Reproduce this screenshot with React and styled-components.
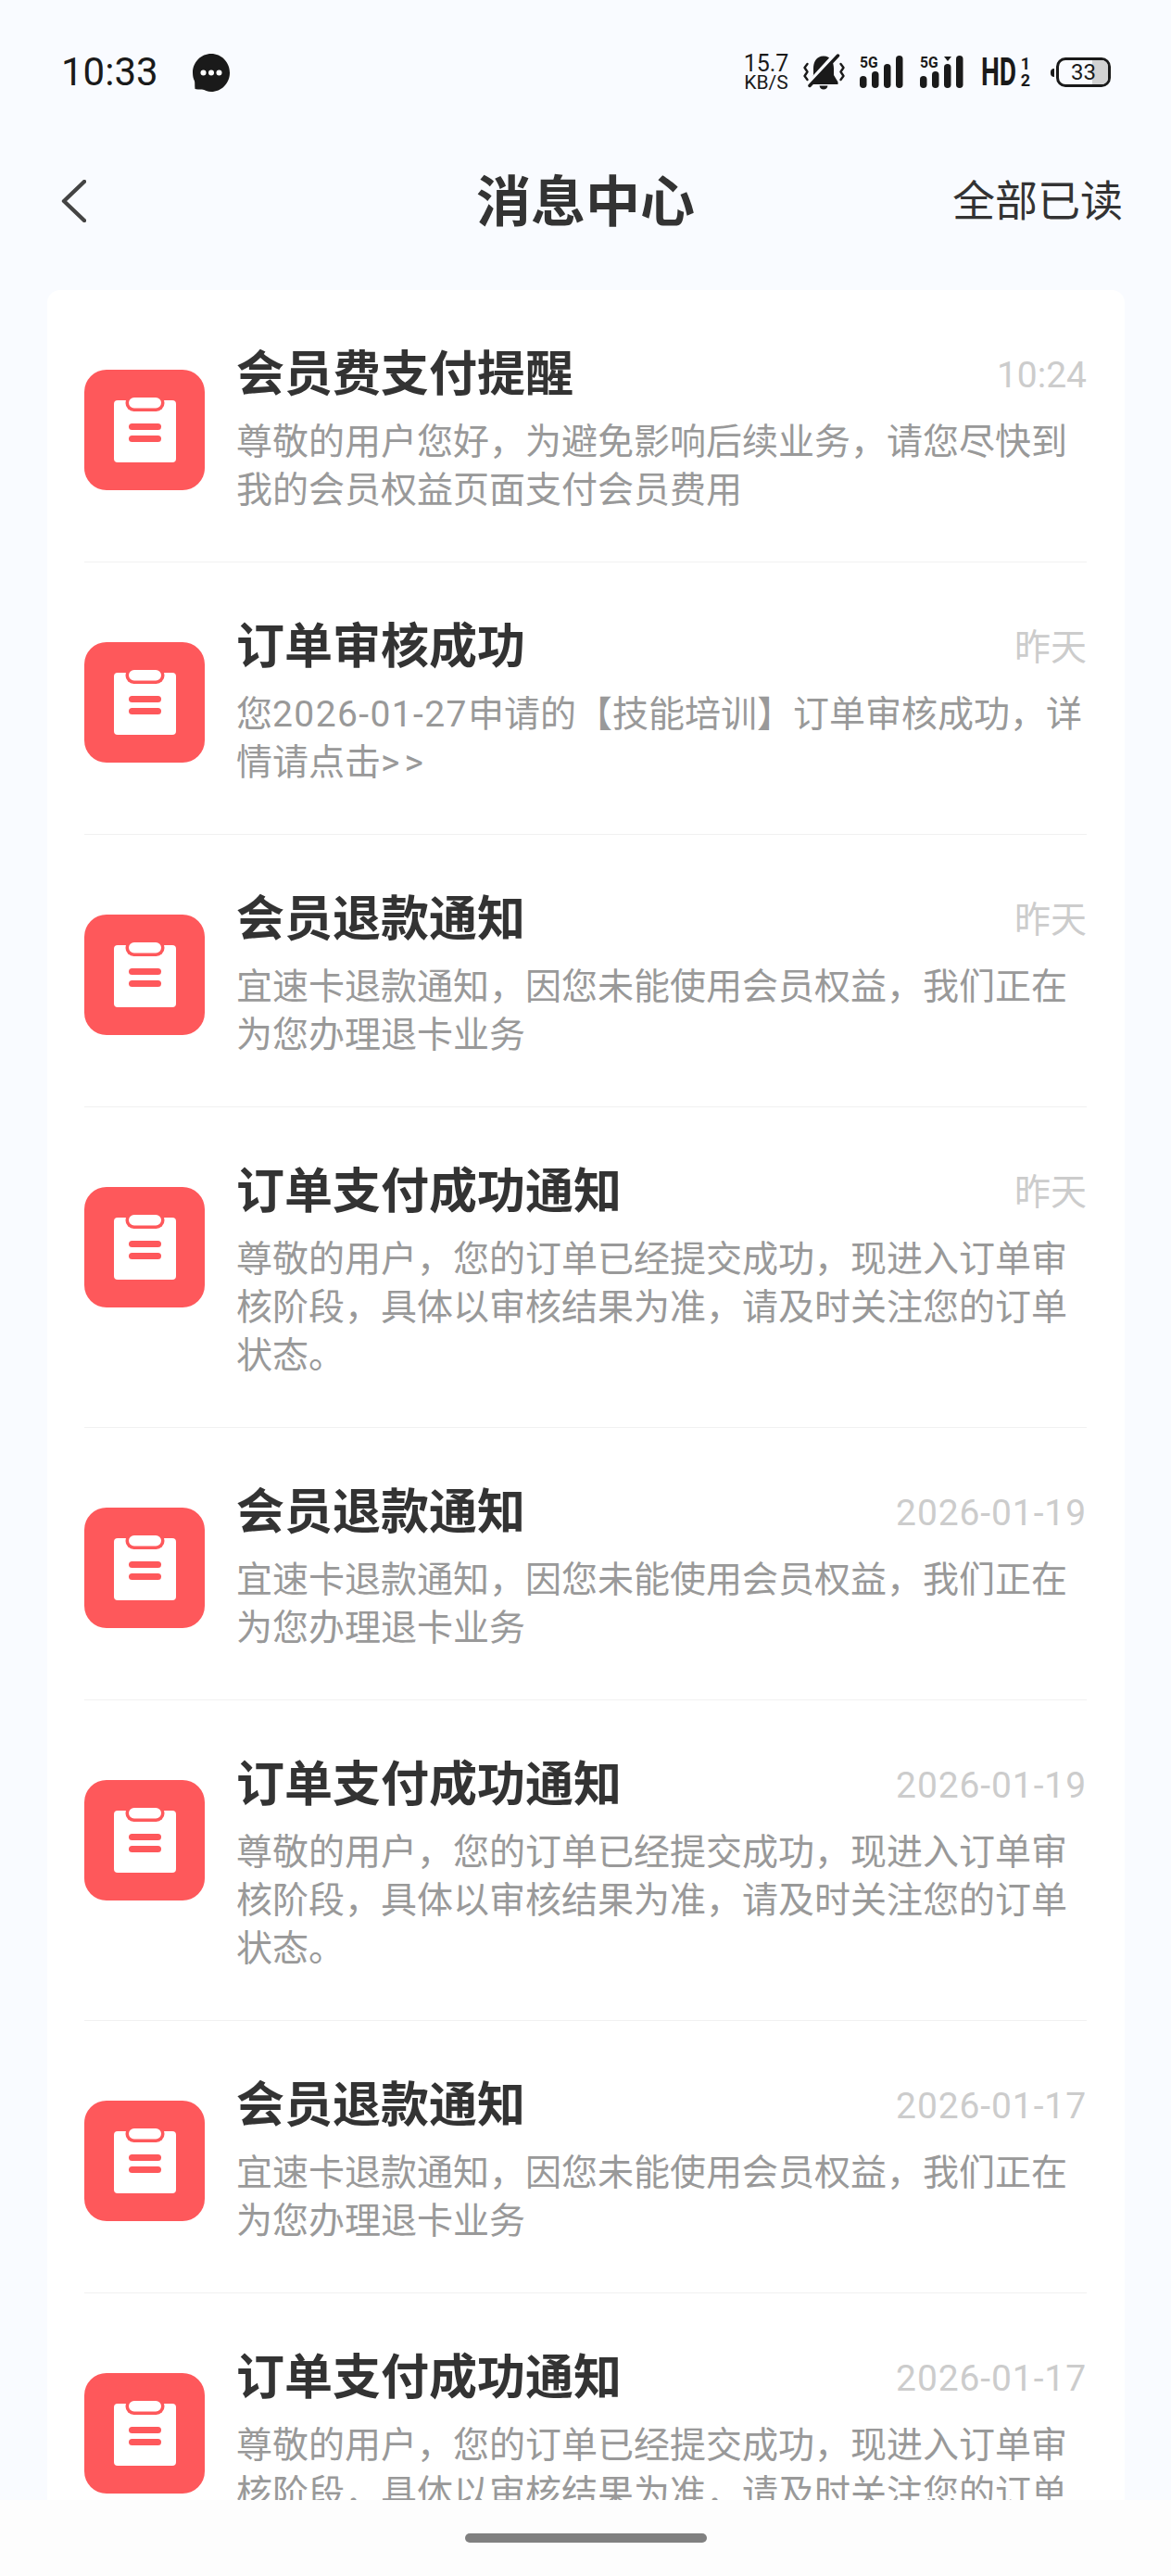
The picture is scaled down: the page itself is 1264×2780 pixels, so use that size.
import React from 'react';
import styled, { createGlobalStyle } from 'styled-components';

const GlobalStyle = createGlobalStyle`
  html, body {
    margin: 0;
    padding: 0;
    background: #f9fbff;
  }
  * {
    box-sizing: border-box;
  }
`;

const Screen = styled.div`
  width: 1264px;
  height: 2780px;
  display: flex;
  flex-direction: column;
  background: #f9fbff;
  font-family: Roboto, "Noto Sans CJK SC", sans-serif;
  overflow: hidden;
`;

const StatusBar = styled.div`
  height: 156px;
  flex: none;
  display: flex;
  align-items: center;
  justify-content: space-between;
  padding: 0 65px 0 66px;
  color: #1a1a1a;
`;

const StatusLeft = styled.div`
  display: flex;
  align-items: center;
  gap: 40px;
`;

const Clock = styled.span`
  font-size: 42px;
  line-height: 50px;
  width: 102px;
  white-space: nowrap;
`;

const StatusRight = styled.div`
  display: flex;
  align-items: center;
`;

const Speed = styled.div`
  width: 48px;
  display: flex;
  flex-direction: column;
  align-items: center;
  margin-right: 16px;
`;

const SpeedValue = styled.span`
  font-size: 25px;
  line-height: 22px;
`;

const SpeedUnit = styled.span`
  font-size: 21px;
  line-height: 18px;
`;

const StatusIcon = styled.svg`
  display: block;
  flex: none;
  margin-right: ${(p) => p.$gap}px;
`;

const SignalWrap = styled.div`
  position: relative;
  width: 47px;
  height: 36px;
  flex: none;
  margin-right: ${(p) => p.$gap}px;
`;

const NetLabel = styled.span`
  position: absolute;
  top: 0;
  left: 0;
  width: 21px;
  font-size: 17px;
  font-weight: 700;
  line-height: 14px;
  transform: scaleX(0.92);
  transform-origin: left center;
`;

const HdBadge = styled.div`
  width: 53px;
  height: 32px;
  display: flex;
  justify-content: space-between;
  margin-right: 22px;
`;

const HdText = styled.span`
  display: block;
  width: 57px;
  margin-right: -19px;
  font-size: 42px;
  font-weight: 700;
  line-height: 32px;
  transform: scaleX(0.67);
  transform-origin: left center;
`;

const HdFraction = styled.div`
  display: flex;
  flex-direction: column;
  justify-content: space-between;
  align-items: center;
  width: 10px;
`;

const HdDigit = styled.span`
  font-size: 18px;
  font-weight: 700;
  line-height: 14px;
`;

const BatteryWrap = styled.div`
  display: flex;
  align-items: center;
  gap: 2px;
`;

const BatteryNub = styled.div`
  width: 4px;
  height: 9px;
  background: #1a1a1a;
  border-radius: 4px 0 0 4px;
`;

const BatteryBody = styled.div`
  position: relative;
  width: 59px;
  height: 32px;
  border: 3.5px solid #1a1a1a;
  border-radius: 10px;
  overflow: hidden;
  display: flex;
  align-items: center;
  justify-content: center;
`;

const BatteryFill = styled.div`
  position: absolute;
  top: 0;
  right: 0;
  bottom: 0;
  width: 17px;
  background: #d2d2d2;
`;

const BatteryLevel = styled.span`
  position: relative;
  font-size: 24px;
  line-height: 1;
`;

const NavBar = styled.div`
  height: 122px;
  flex: none;
  display: grid;
  grid-template-columns: 1fr auto 1fr;
  align-items: center;
  padding: 0 52px;
  color: #333;
`;

const BackButton = styled.div`
  padding-left: 14px;
`;

const Title = styled.h1`
  margin: 3px 0 0;
  font-size: 59px;
  font-weight: 700;
  line-height: 70px;
  color: #333;
`;

const ReadAll = styled.span`
  justify-self: end;
  font-size: 46px;
  line-height: 60px;
  color: #333;
`;

const ListArea = styled.div`
  flex: 1;
  min-height: 0;
  overflow: hidden;
  padding: 35px 50px 0 51px;
`;

const Card = styled.div`
  background: #fff;
  border-radius: 14px;
  padding: 0 41px 0 40px;
`;

const Row = styled.div`
  display: flex;
  align-items: flex-start;
  gap: 34px;
  padding: 61px 0 51px;
  border-bottom: 1px solid #f1f1f1;
`;

const RowTile = styled.svg`
  display: block;
  flex: none;
  margin-top: 25px;
`;

const RowBody = styled.div`
  flex: 1;
  min-width: 0;
`;

const RowHead = styled.div`
  display: flex;
  align-items: center;
  justify-content: space-between;
`;

const RowTitle = styled.span`
  font-size: 52px;
  font-weight: 700;
  line-height: 62px;
  color: #333;
`;

const RowTime = styled.span`
  font-size: 39px;
  line-height: 62px;
  letter-spacing: ${(p) => (p.$isDate ? '0.9px' : '0')};
  color: #ccc;
`;

const RowText = styled.p`
  margin: 15px 0 0;
  font-size: 39px;
  line-height: 52px;
  color: #999;
`;

const WideRun = styled.span`
  letter-spacing: ${(p) => p.$spacing}px;
`;

const HomeBar = styled.div`
  height: 82px;
  flex: none;
  display: flex;
  align-items: center;
  justify-content: center;
  background: #fdfdfd;
`;

const HomeIndicator = styled.div`
  width: 261px;
  height: 10px;
  border-radius: 5px;
  background: #808080;
`;

const TileIcon = () => (
  <RowTile width="130" height="130" viewBox="0 0 130 130">
    <rect width="130" height="130" rx="24" fill="#fe585b" />
    <rect x="32" y="33" width="67" height="67" rx="4" fill="#fff" />
    <rect x="44.5" y="27" width="42" height="18" rx="9" fill="#fe585b" />
    <rect x="48" y="30" width="35" height="11.5" rx="5.75" fill="#fff" />
    <rect x="48" y="58" width="35" height="7" rx="3.5" fill="#fe585b" />
    <rect x="48" y="71" width="35" height="7" rx="3.5" fill="#fe585b" />
  </RowTile>
);

const BubbleIcon = () => (
  <StatusIcon $gap={0} width="40" height="41" viewBox="0 0 40 41">
    <path
      d="M20 0C31 0 40 9 40 20.5C40 32 31 41 20 41C16 41 13 39 10 38.5C7 38.5 4 38.5 2.5 38C2 34 2.5 32 2 29.5C.7 27 0 24 0 20.5C0 9 9 0 20 0Z"
      fill="#1a1a1a"
    />
    <circle cx="11.5" cy="20.5" r="3" fill="#fff" />
    <circle cx="20" cy="20.5" r="3" fill="#fff" />
    <circle cx="28.5" cy="20.5" r="3" fill="#fff" />
  </StatusIcon>
);

const BellMutedIcon = () => (
  <StatusIcon $gap={16} width="45" height="40" viewBox="0 0 45 40">
    <path d="M22 2.5C14 2.5 11 9 11 16V23L7.5 30.5V33H37.5V30.5L33 23V16C33 9 30 2.5 22 2.5Z" fill="#1a1a1a" />
    <path d="M17.5 34.5H26.5C26 37 24.5 38.5 22 38.5C19.5 38.5 18 37 17.5 34.5Z" fill="#1a1a1a" />
    <path d="M4.5 34L35 .5" stroke="#f9fbff" strokeWidth="5" fill="none" />
    <path d="M7 34.5L37.5 2" stroke="#1a1a1a" strokeWidth="3.5" strokeLinecap="round" fill="none" />
    <path
      d="M4.5 11L1.5 15L4.5 19.5L1.5 24L4.5 28M40.5 11L43.5 15L40.5 19.5L43.5 24L40.5 28"
      stroke="#1a1a1a"
      strokeWidth="2.4"
      strokeLinecap="round"
      strokeLinejoin="round"
      fill="none"
    />
  </StatusIcon>
);

const bars = [
  { x: 0, y: 22 },
  { x: 13, y: 17 },
  { x: 26, y: 9 },
  { x: 39, y: 0 },
];

const SignalIcon = ({ gap, showArrow }) => (
  <SignalWrap $gap={gap}>
    <StatusIcon $gap={0} width="47" height="36" viewBox="0 0 47 36">
      {bars.map((b) => (
        <rect key={b.x} x={b.x} y={b.y} width="7.5" height={35 - b.y} rx="3.75" fill="#1a1a1a" />
      ))}
      {showArrow && <path d="M26 1H34L30 6Z" fill="#1a1a1a" />}
    </StatusIcon>
    <NetLabel>5G</NetLabel>
  </SignalWrap>
);

const BackIcon = () => (
  <svg width="27" height="46" viewBox="0 0 27 46" style={{ display: 'block' }}>
    <path d="M25 2L3 23L25 44" stroke="#444" strokeWidth="4.4" strokeLinecap="round" strokeLinejoin="round" fill="none" />
  </svg>
);

const PAY_TEXT = '尊敬的用户，您的订单已经提交成功，现进入订单审核阶段，具体以审核结果为准，请及时关注您的订单状态。';
const REFUND_TEXT = '宜速卡退款通知，因您未能使用会员权益，我们正在为您办理退卡业务';

const AUDIT_TEXT = (
  <>
    您<WideRun $spacing={1.4}>2026-01-27</WideRun>申请的【技能培训】订单审核成功，详情请点击<WideRun $spacing={5}>&gt;&gt;</WideRun>
  </>
);

const messages = [
  { title: '会员费支付提醒', time: '10:24', text: '尊敬的用户您好，为避免影响后续业务，请您尽快到我的会员权益页面支付会员费用' },
  { title: '订单审核成功', time: '昨天', text: AUDIT_TEXT },
  { title: '会员退款通知', time: '昨天', text: REFUND_TEXT },
  { title: '订单支付成功通知', time: '昨天', text: PAY_TEXT },
  { title: '会员退款通知', time: '2026-01-19', isDate: true, text: REFUND_TEXT },
  { title: '订单支付成功通知', time: '2026-01-19', isDate: true, text: PAY_TEXT },
  { title: '会员退款通知', time: '2026-01-17', isDate: true, text: REFUND_TEXT },
  { title: '订单支付成功通知', time: '2026-01-17', isDate: true, text: PAY_TEXT },
];

const App = () => {
  return (
    <Screen>
      <GlobalStyle />
      <StatusBar>
        <StatusLeft>
          <Clock>10:33</Clock>
          <BubbleIcon />
        </StatusLeft>
        <StatusRight>
          <Speed>
            <SpeedValue>15.7</SpeedValue>
            <SpeedUnit>KB/S</SpeedUnit>
          </Speed>
          <BellMutedIcon />
          <SignalIcon gap={18} />
          <SignalIcon gap={19} showArrow />
          <HdBadge>
            <HdText>HD</HdText>
            <HdFraction>
              <HdDigit>1</HdDigit>
              <HdDigit>2</HdDigit>
            </HdFraction>
          </HdBadge>
          <BatteryWrap>
            <BatteryNub />
            <BatteryBody>
              <BatteryFill />
              <BatteryLevel>33</BatteryLevel>
            </BatteryBody>
          </BatteryWrap>
        </StatusRight>
      </StatusBar>
      <NavBar>
        <BackButton>
          <BackIcon />
        </BackButton>
        <Title>消息中心</Title>
        <ReadAll>全部已读</ReadAll>
      </NavBar>
      <ListArea>
        <Card>
          {messages.map((m, i) => (
            <Row key={i}>
              <TileIcon />
              <RowBody>
                <RowHead>
                  <RowTitle>{m.title}</RowTitle>
                  <RowTime $isDate={m.isDate}>{m.time}</RowTime>
                </RowHead>
                <RowText>{m.text}</RowText>
              </RowBody>
            </Row>
          ))}
        </Card>
      </ListArea>
      <HomeBar>
        <HomeIndicator />
      </HomeBar>
    </Screen>
  );
};

export default App;
